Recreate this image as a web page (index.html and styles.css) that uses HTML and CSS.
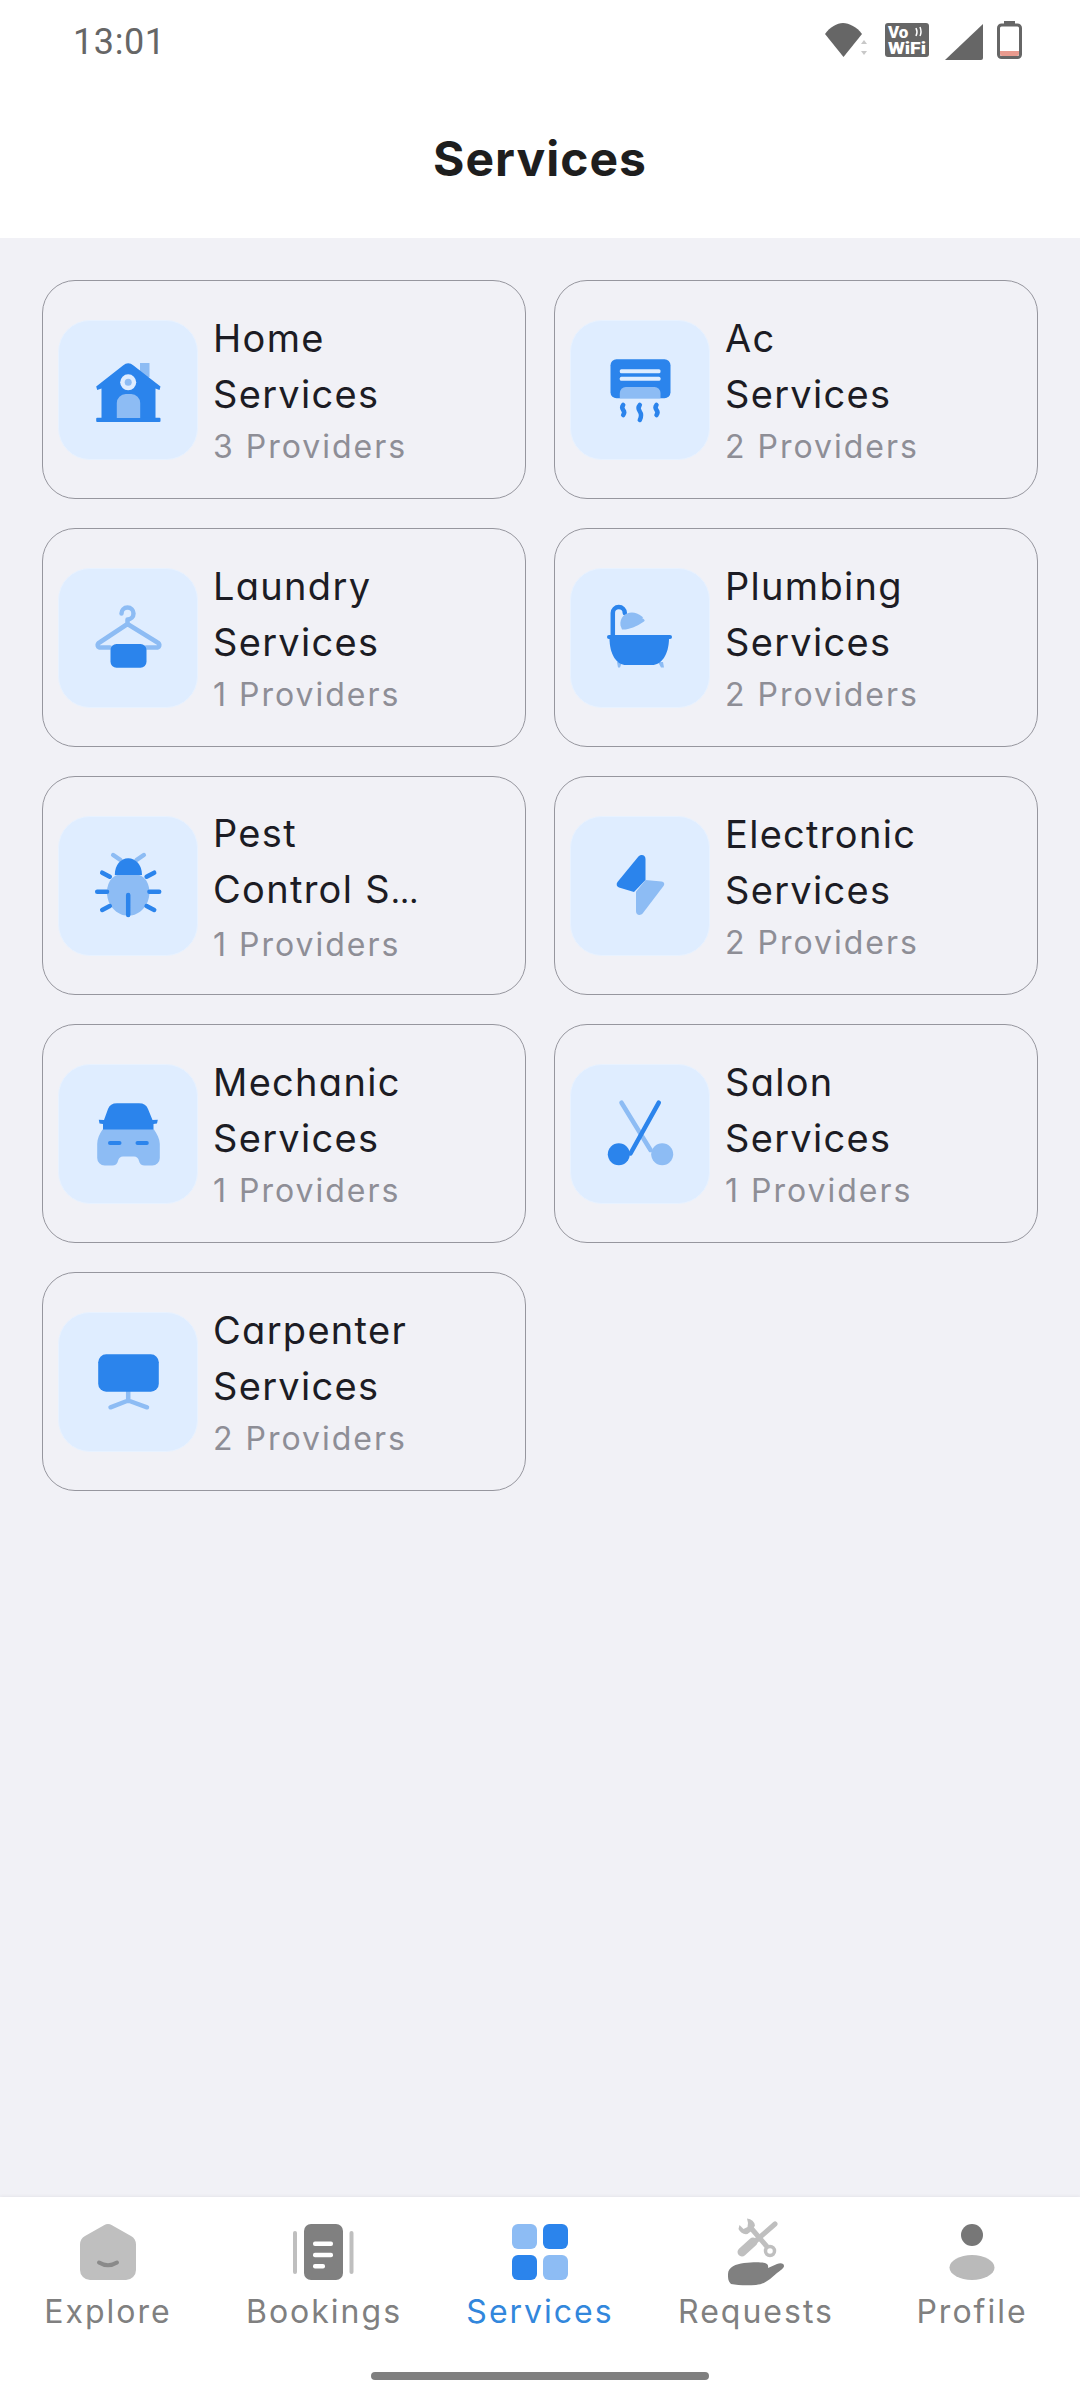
FILE: index.html
```html
<!DOCTYPE html>
<html lang="en">
<head>
<meta charset="utf-8">
<title>Services</title>
<link rel="stylesheet" href="styles.css">
</head>
<body>
<div class="screen">
  <header class="top">
    <div class="status">
      <span class="time">13:01</span>
      <div class="status-icons">
        <svg class="s-wifi" viewBox="0 0 42 34"><path class="g" d="M0 11C5 4 12 0 18 0s14 4 19 11L18.500 34z"/><path class="g2" d="M36 21l3-4 3 4zM36 28h6l-3 4z"/></svg>
        <svg class="s-vowifi" viewBox="0 0 44 34"><rect class="g" width="44" height="34" rx="3"/><text class="vo" x="3" y="15">Vo</text><path class="wave" d="M31 5q2 4 0 8M35 4q2 5 0 9"/><text class="vo" x="3" y="31" textLength="38" lengthAdjust="spacingAndGlyphs">WiFi</text></svg>
        <svg class="s-signal" viewBox="0 0 38 38"><path class="g" d="M38 2V36a2 2 0 0 1-2 2H0z"/></svg>
        <svg class="s-batt" viewBox="0 0 25 38"><rect class="g" x="7" y="0" width="11" height="5"/><rect class="batt-body" x="1.500" y="4" width="22" height="32.500" rx="3"/><path class="batt-low" d="M3 30h19v3a2 2 0 0 1-2 2H5a2 2 0 0 1-2-2z"/></svg>
      </div>
    </div>
    <h1 class="title">Services</h1>
  </header>

  <main class="content">
    <section class="grid">
      <article class="card">
        <div class="tile"><svg class="ico" viewBox="0 0 76 76">
          <rect class="l" x="50" y="11" width="9.500" height="14"/>
          <path class="d" d="M11.500 36.500L7.200 38 6.200 34.500 33 13.500Q38.200 9 43.500 13.500L70.500 34.500 69.500 38 65.500 36.500V66h-54z"/>
          <rect class="d" x="6.200" y="65.700" width="64.300" height="4.300" rx="1"/>
          <circle class="bg" cx="38.200" cy="30.300" r="8"/><circle class="l" cx="38.200" cy="30.300" r="3.500"/>
          <path class="l" d="M26.800 66V51a9 9 0 0 1 9-9h5.400a9 9 0 0 1 9 9v15z"/>
        </svg></div>
        <div class="info"><h2 class="name">Home<br>Services</h2><p class="count">3 Providers</p></div>
      </article>
      <article class="card">
        <div class="tile"><svg class="ico" viewBox="0 0 76 76">
          <rect class="d" x="8.500" y="7.300" width="60" height="39" rx="6"/>
          <rect class="bg" x="17.800" y="17.300" width="40.700" height="4" rx="1.500"/><rect class="bg" x="17.800" y="24.800" width="40.700" height="4" rx="1.500"/>
          <path class="l" d="M17.800 46.300V41a6 6 0 0 1 6-6h28.700a6 6 0 0 1 6 6v5.300z"/>
          <path class="sd" d="M21.200 53q-2 2.500 0 5t0 5M37.800 53q-2.500 3 0 6.500t0 8.500M54.500 53q-2 2.500 0 5t0 5"/>
        </svg></div>
        <div class="info"><h2 class="name">Ac<br>Services</h2><p class="count">2 Providers</p></div>
      </article>
      <article class="card">
        <div class="tile"><svg class="ico" viewBox="0 0 76 76">
          <path class="sl" d="M31.500 13.500a6 6 0 1 1 6 6V24M37.500 24L9.500 42.500a2.500 2.500 0 0 0 1.500 5H20M37.500 24L67.500 42.500a2.500 2.500 0 0 1-1.500 5H56"/>
          <rect class="d" x="20.500" y="44" width="36" height="23.700" rx="6"/>
        </svg></div>
        <div class="info"><h2 class="name">Laundry<br>Services</h2><p class="count">1 Providers</p></div>
      </article>
      <article class="card">
        <div class="tile"><svg class="ico" viewBox="0 0 76 76">
          <path class="sd" d="M10.800 37V13a6 6 0 0 1 12 0"/>
          <path class="l" d="M18.500 25.500C17 14 30 8 40 16.500c2 1.500 0 1.500 0 1.500q4 2 2 3.500C34 27 26 30 20 29.500z"/>
          <path class="l" d="M15 62h5l-2 5.500h-2zM56 62h5l1 5.500h-3z"/>
          <rect class="d" x="5" y="35" width="65" height="4" rx="2"/>
          <path class="d" d="M7.500 38H67C67 55 59 65 50 65H24C15 65 7.500 55 7.500 38z"/>
        </svg></div>
        <div class="info"><h2 class="name">Plumbing<br>Services</h2><p class="count">2 Providers</p></div>
      </article>
      <article class="card">
        <div class="tile"><svg class="ico" viewBox="0 0 76 76">
          <path class="sl2" d="M23.200 7l7.300 5M53.800 7l-7.300 5"/>
          <path class="l" d="M17 44.500C17 32 24 25 38.200 25S59.400 32 59.400 44.500 50 67.700 38.200 67.700 17 57 17 44.500z"/>
          <path class="d" d="M24.800 27c0-10 6-16.700 13.400-16.700S52 17 52 27z"/>
          <path class="sd2" d="M38.200 47V67M12.200 24.700l7.600 4M7.200 43.700H17M12.200 62l7.600-4M64.200 24.700l-7.600 4M69.200 43.700H59.400M64.200 62l-7.600-4"/>
        </svg></div>
        <div class="info"><h2 class="name">Pest<br>Control S<span class="dots">…</span></h2><p class="count">1 Providers</p></div>
      </article>
      <article class="card">
        <div class="tile"><svg class="ico" viewBox="0 0 76 76">
          <path class="d" d="M36 9c3-3.500 7.500-2 7.500 2V32L32 44 17 39.500c-2.500-1-3-3.500-1.500-5.500z"/>
          <path class="l" d="M43.500 32L59.500 33.500c2.500.3 3.500 2.500 2 4.500L41 65c-3 3.500-7 2-7-2V43.700z"/>
        </svg></div>
        <div class="info"><h2 class="name">Electronic<br>Services</h2><p class="count">2 Providers</p></div>
      </article>
      <article class="card">
        <div class="tile"><svg class="ico" viewBox="0 0 76 76">
          <path class="d" d="M14 24L8.800 23.800 9.500 27.500 13 28 13 36H63.500L63.500 28 67 27.500 67.800 23.800 62.500 24 58 13Q56 7.300 49 7.300H27Q20 7.300 18 13z"/>
          <path class="l" d="M12.500 33.500H64C67 38 69.800 43 69.800 48V62a7.500 7.500 0 0 1-7.500 7.500H55a6 6 0 0 1-6-4.500q-1-4.500-5-4.500H33q-4 0-5 4.500a6 6 0 0 1-6 4.500H14.700a7.500 7.500 0 0 1-7.500-7.500V48C7.200 43 9.500 38 12.500 33.500z"/>
          <rect class="d" x="18" y="45" width="13.500" height="4" rx="2"/><rect class="d" x="45.500" y="45" width="13.300" height="4" rx="2"/>
        </svg></div>
        <div class="info"><h2 class="name">Mechanic<br>Services</h2><p class="count">1 Providers</p></div>
      </article>
      <article class="card">
        <div class="tile"><svg class="ico" viewBox="0 0 76 76">
          <path class="sl2" d="M19.500 6.700L48.500 54"/><circle class="l" cx="60.200" cy="58.300" r="11"/>
          <path class="sd" d="M56.800 6.700L28.500 57.500"/><circle class="d" cx="16.800" cy="58.300" r="11"/>
        </svg></div>
        <div class="info"><h2 class="name">Salon<br>Services</h2><p class="count">1 Providers</p></div>
      </article>
      <article class="card">
        <div class="tile"><svg class="ico" viewBox="0 0 76 76">
          <path class="sl" d="M38.200 47V57M20.500 63.300L38.200 56.500 57 63.300"/>
          <rect class="d" x="8.200" y="10.300" width="60.600" height="37.400" rx="8"/>
        </svg></div>
        <div class="info"><h2 class="name">Carpenter<br>Services</h2><p class="count">2 Providers</p></div>
      </article>
    </section>
  </main>

  <nav class="nav">
    <div class="nav-items">
      <a class="nav-item">
        <svg class="nav-ico" viewBox="0 0 72 72"><path class="ng" d="M32 9.200a8 8 0 0 1 8 0L59 20a10 10 0 0 1 5 8.500V54a10 10 0 0 1-10 10H18A10 10 0 0 1 8 54V28.500A10 10 0 0 1 13 20z"/><path class="smile" d="M27 46.500q9 5.500 18 0"/></svg>
        <span>Explore</span>
      </a>
      <a class="nav-item">
        <svg class="nav-ico" viewBox="0 0 72 72"><rect class="ng" x="5" y="15" width="4" height="43" rx="2"/><rect class="ng" x="61.500" y="15" width="4" height="43" rx="2"/><rect class="nd" x="16" y="8" width="39" height="56" rx="7"/><rect class="w" x="25" y="25.500" width="20" height="4.500" rx="2"/><rect class="w" x="25" y="36.700" width="20" height="4.500" rx="2"/><rect class="w" x="25" y="48" width="12" height="4.500" rx="2"/></svg>
        <span>Bookings</span>
      </a>
      <a class="nav-item active">
        <svg class="nav-ico" viewBox="0 0 72 72"><rect class="l" x="8" y="8" width="25" height="25" rx="6"/><rect class="d" x="39" y="8" width="25" height="25" rx="6"/><rect class="d" x="8" y="39" width="25" height="25" rx="6"/><rect class="l" x="39" y="39" width="25" height="25" rx="6"/></svg>
        <span>Services</span>
      </a>
      <a class="nav-item">
        <svg class="nav-ico" viewBox="0 0 72 72">
          <path class="tool" d="M55 8L31 29"/><path class="tool-w" d="M22 36L33 26"/>
          <path class="tool" d="M31 12L49 33"/>
          <path class="ng" d="M27 2.500q7 1 8 7l-3 5-4.500 3.500q-6 1-9-5l1-4 4 4 4-2 .5-4z"/>
          <circle class="ring" cx="50" cy="35" r="4.500"/>
          <path class="nd" d="M8 58c0-7 8-10 16-11 9-1 17-1 21 0 3 1 3.500 3 3 5l9-4c4-1.500 7-.5 7 2 0 2-3 4-7 7-6 5-11 11-21 12-8 .5-18 .5-25-1-3-3-3-6-3-10z"/>
        </svg>
        <span>Requests</span>
      </a>
      <a class="nav-item">
        <svg class="nav-ico" viewBox="0 0 72 72"><circle class="pd" cx="36" cy="19" r="11"/><ellipse class="ng2" cx="36" cy="51.500" rx="22.500" ry="12.500"/></svg>
        <span>Profile</span>
      </a>
    </div>
    <div class="home-bar"></div>
  </nav>
</div>
</body>
</html>
```
FILE: styles.css
```css
* { box-sizing: border-box; margin: 0; padding: 0; }
html, body { width: 1080px; height: 2400px; overflow: hidden; }
body { font-family: "Inter", "Lato", sans-serif; font-feature-settings: "cv11" 1; background: #f1f1f6; }
.screen { width: 1080px; height: 2400px; display: flex; flex-direction: column; }

.top { height: 238px; background: #fff; display: flex; flex-direction: column; flex: none; }
.status { display: flex; justify-content: space-between; align-items: flex-start; padding: 21px 58px 0 73px; height: 129px; }
.time { font-family: "Roboto", sans-serif; font-size: 36px; line-height: 40px; margin-top: 1px; color: #666; letter-spacing: 0.600px; font-feature-settings: normal; }
.status-icons { display: flex; align-items: flex-start; }
.status-icons svg { display: block; }
.s-wifi { width: 42px; height: 34px; margin-top: 2px; margin-right: 18px; }
.s-vowifi { width: 44px; height: 34px; margin-top: 2px; margin-right: 16px; }
.s-signal { width: 38px; height: 38px; margin-top: 1px; margin-right: 14px; }
.s-batt { width: 25px; height: 38px; }
.g { fill: #666; }
.g2 { fill: #c8c8c8; }
.vo { font-family: "Roboto", sans-serif; font-weight: 900; font-size: 17px; fill: #fff; font-feature-settings: normal; }
.wave { fill: none; stroke: #fff; stroke-width: 1.500; }
.batt-body { fill: #fff; stroke: #666; stroke-width: 3; }
.batt-low { fill: #e99a8e; }

.title { text-align: center; font-size: 48px; line-height: 60px; font-weight: 700; color: #1e1e1e; letter-spacing: 1px; }

.content { flex: 1; padding: 42px 42px 0; }
.grid { display: grid; grid-template-columns: 484px 484px; column-gap: 28px; row-gap: 29px; grid-auto-rows: 219px; }
.card { border: 1.500px solid #96969e; border-radius: 33px; display: flex; align-items: center; padding: 0 14.500px; gap: 15.500px; }
.tile { width: 140px; height: 140px; flex: none; background: #dfedff; border: 1px solid #e8f2ff; border-radius: 32px; display: flex; align-items: center; justify-content: center; }
.ico { width: 76px; height: 76px; display: block; }
.d { fill: #2b84ec; }
.l { fill: #8dbcf4; }
.bg { fill: #dfedff; }
.sd, .sd2, .sl, .sl2 { fill: none; stroke-linecap: round; stroke-linejoin: round; stroke-width: 4.500px; }
.sd, .sd2 { stroke: #2b84ec; }
.sl, .sl2 { stroke: #8dbcf4; }

.info { padding-top: 3px; }
.name { font-size: 38px; line-height: 56px; font-weight: 400; color: #1c1c24; letter-spacing: 1.300px; }
.dots { letter-spacing: -1px; font-size: 32px; }
.count { font-size: 32px; line-height: 50px; color: #8e8e96; letter-spacing: 2px; }

.nav { height: 203px; flex: none; background: #fff; box-shadow: 0 -1px 3px rgba(0,0,0,.05); display: flex; flex-direction: column; align-items: center; }
.nav-items { display: grid; grid-template-columns: repeat(5, 216px); padding-top: 19px; }
.nav-item { display: flex; flex-direction: column; align-items: center; font-size: 32px; line-height: 44px; color: #808080; letter-spacing: 2px; }
.nav-item.active { color: #3287dc; }
.nav-ico { width: 72px; height: 72px; display: block; margin-bottom: 2px; }
.ng { fill: #bfbfbf; }
.ng2 { fill: #bababa; }
.nd { fill: #808080; }
.pd { fill: #777; }
.w { fill: #fff; }
.smile { fill: none; stroke: #8a8a8a; stroke-width: 4px; stroke-linecap: round; }
.tool { fill: none; stroke: #bfbfbf; stroke-width: 5px; stroke-linecap: round; }
.tool-w { fill: none; stroke: #bfbfbf; stroke-width: 9px; stroke-linecap: round; }
.ring { fill: #fff; stroke: #bfbfbf; stroke-width: 3.500px; }
.home-bar { width: 338px; height: 8px; border-radius: 4px; background: #7f7f7f; margin-top: 38px; }
```
